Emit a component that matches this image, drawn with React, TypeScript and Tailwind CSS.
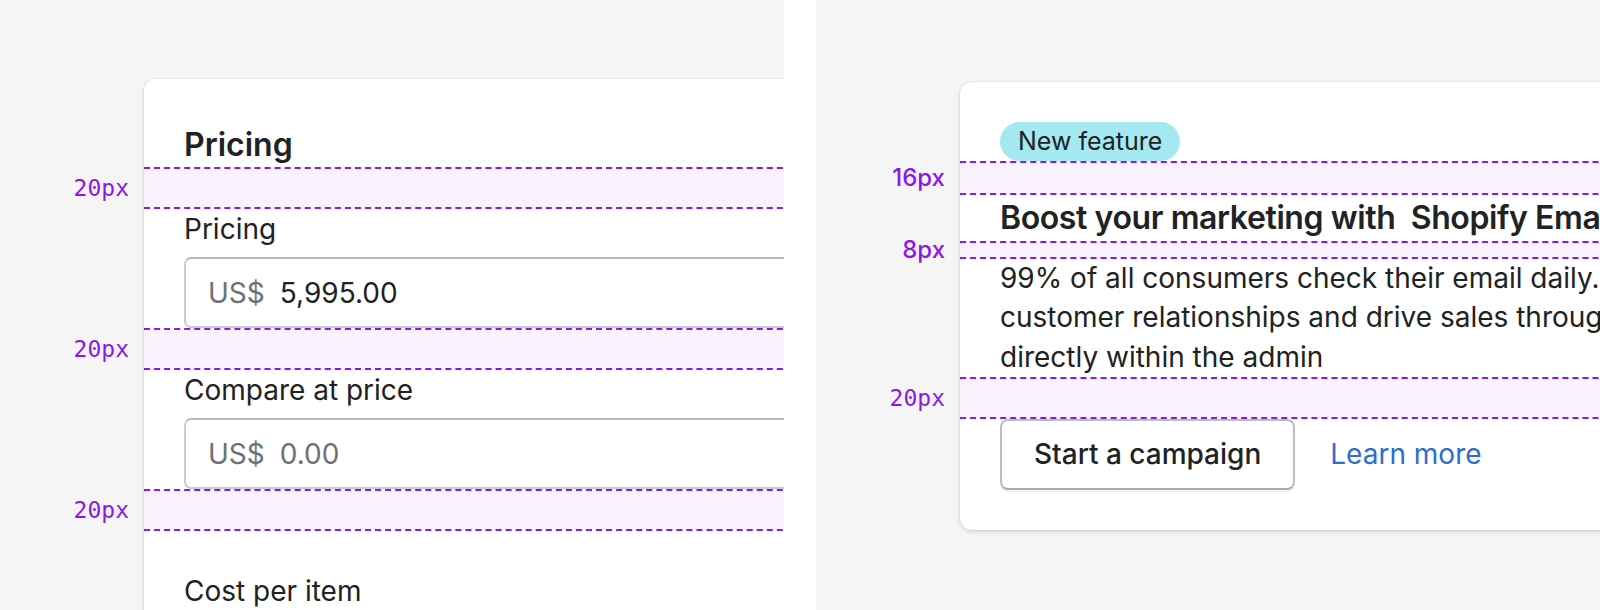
import React from "react"

/* spacing annotation band drawn over the card */
function Band({ h, label, mono = true }: { h: string; label: string; mono?: boolean }) {
  return (
    <div className={`relative -ml-[40px] w-[calc(100%+40px)] ${h} border-y-2 border-dashed border-[#8c17e8] bg-[#f8f3fd]`}>
      <span
        className={`absolute right-[calc(100%+15px)] top-1/2 -translate-y-1/2 whitespace-nowrap text-[#8c17e8] ${mono ? "font-['DejaVu_Sans_Mono',monospace] text-[23px] font-normal" : "font-['Inter',sans-serif] text-[24px] font-medium"}`}
      >
        {label}
      </span>
    </div>
  )
}

function Field({ label, value, muted }: { label: string; value: string; muted?: boolean }) {
  return (
    <div className="flex flex-col">
      <label className="text-[28px] leading-[40px] text-[#202223]">{label}</label>
      <div className="mt-[8px] flex h-[71px] w-[900px] items-center rounded-[7px] border-2 border-[#c9cccf] border-t-[#b4b8bd] pl-[22px] text-[28px]">
        <span className="text-[#6d7175]">US$</span>
        <span className={`ml-[15px] ${muted ? "text-[#6d7175]" : "text-[#202223]"}`}>{value}</span>
      </div>
    </div>
  )
}

export default function App() {
  return (
    <div className="flex h-[610px] w-[1600px] bg-white font-['Inter',sans-serif] text-[#202223]">
      {/* left: pricing card */}
      <div className="h-full w-[784px] overflow-hidden bg-[#f5f5f5] pl-[144px] pt-[79px]">
        <div className="w-[900px] rounded-[12px] bg-white pl-[40px] pt-[44px] pb-[60px] shadow-[0_0_0_1px_rgba(63,63,68,0.05),0_2px_4px_rgba(63,63,68,0.15)]">
          <h2 className="text-[32px] font-semibold leading-[44px]">Pricing</h2>
          <Band h="h-[42px]" label="20px" />
          <Field label="Pricing" value="5,995.00" />
          <Band h="h-[42px]" label="20px" />
          <Field label="Compare at price" value="0.00" muted />
          <Band h="h-[42px]" label="20px" />
          <label className="mt-[40px] block text-[28px] leading-[40px]">Cost per item</label>
        </div>
      </div>

      <div className="w-[32px]" />

      {/* right: callout card */}
      <div className="h-full w-[784px] overflow-hidden bg-[#f5f5f5] pl-[144px] pt-[82px]">
        <div className="w-[1000px] rounded-[12px] bg-white pl-[40px] pt-[40px] pb-[40px] shadow-[0_0_0_1px_rgba(63,63,68,0.05),0_2px_4px_rgba(63,63,68,0.15)]">
          <div className="flex">
            <span className="flex h-[39px] items-center rounded-full bg-[#a4e8f2] px-[18px] text-[25px]">New feature</span>
          </div>
          <Band h="h-[34px]" label="16px" mono={false} />
          <h2 className="whitespace-nowrap text-[32px] font-semibold leading-[46px] tracking-[-0.4px]">Boost your marketing with{"\u00a0"} Shopify Email</h2>
          <Band h="h-[18px]" label="8px" mono={false} />
          <p className="whitespace-nowrap text-[28px] leading-[39.33px]">
            99% of all consumers check their email daily. Build
            <br />
            customer relationships and drive sales through email marketing
            <br />
            directly within the admin
          </p>
          <Band h="h-[42px]" label="20px" />
          <div className="flex items-center">
            <button className="h-[71px] rounded-[8px] border-2 border-[#babfc3] border-b-[#a6acb2] bg-white px-[32px] text-[28px] font-medium text-[#202223] shadow-[0_2px_0_rgba(0,0,0,0.05)]">
              Start a campaign
            </button>
            <a className="ml-[35px] text-[28px] text-[#2c6ecb]">Learn more</a>
          </div>
        </div>
      </div>
    </div>
  )
}
